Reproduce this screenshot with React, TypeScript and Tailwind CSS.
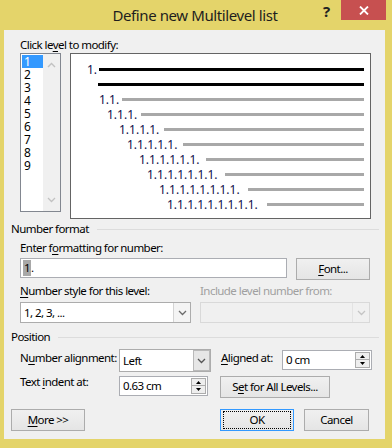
import React from 'react';

function U({ children }: { children: React.ReactNode }) {
  return <span className="underline decoration-1 underline-offset-[2px]">{children}</span>;
}

function Chevron({ color = '#6b6b6b' }: { color?: string }) {
  return (
    <svg width="9" height="6" viewBox="0 0 9 6">
      <path d="M1 1l3.5 3.5L8 1" fill="none" stroke={color} strokeWidth="1.3" />
    </svg>
  );
}

function Spin() {
  return (
    <div className="mr-[1px] flex h-[16px] w-[15px] flex-col">
      <div className="flex h-[8px] items-center justify-center border border-[#acacac] bg-[#eeeeee]">
        <svg width="5" height="3" viewBox="0 0 5 3">
          <path d="M0 3L2.5 0L5 3Z" fill="#000" />
        </svg>
      </div>
      <div className="-mt-px flex h-[9px] items-center justify-center border border-[#acacac] bg-[#eeeeee]">
        <svg width="5" height="3" viewBox="0 0 5 3">
          <path d="M0 0L2.5 3L5 0Z" fill="#000" />
        </svg>
      </div>
    </div>
  );
}

function Button({ className, children, focused }: { className: string; children: React.ReactNode; focused?: boolean }) {
  return (
    <div
      className={`flex h-[22px] border bg-linear-to-b from-[#f0f0f0] to-[#e5e5e5] ${
        focused ? 'border-[#3399ff] px-[2px] py-[1px]' : 'border-[#acacac]'
      } ${className}`}
    >
      <div
        className={`flex flex-1 items-center justify-center whitespace-nowrap leading-[16px] ${
          focused ? 'border border-dotted border-black' : ''
        }`}
      >
        {children}
      </div>
    </div>
  );
}

function GroupHeader({ title }: { title: string }) {
  return (
    <div className="ml-[7px] mr-[6px] flex items-center leading-[16px]">
      <span>{title}</span>
      <div className="ml-[8px] h-px flex-1 bg-[#dcdcdc]" />
    </div>
  );
}

const levels = ['1', '2', '3', '4', '5', '6', '7', '8', '9'];

const previewRows = [
  { label: '1.', pad: 'pl-[16px]', box: 'w-[12px]', line: 'bg-black' },
  { label: '', pad: 'pl-[27px]', box: 'w-0', line: 'bg-black' },
  { label: '1.1.', pad: 'pl-[28px]', box: 'w-[23px]', line: 'bg-[#a8a8a8]' },
  { label: '1.1.1.', pad: 'pl-[36px]', box: 'w-[34px]', line: 'bg-[#a8a8a8]' },
  { label: '1.1.1.1.', pad: 'pl-[48px]', box: 'w-[45px]', line: 'bg-[#a8a8a8]' },
  { label: '1.1.1.1.1.', pad: 'pl-[56px]', box: 'w-[56px]', line: 'bg-[#a8a8a8]' },
  { label: '1.1.1.1.1.1.', pad: 'pl-[68px]', box: 'w-[67px]', line: 'bg-[#a8a8a8]' },
  { label: '1.1.1.1.1.1.1.', pad: 'pl-[76px]', box: 'w-[78px]', line: 'bg-[#a8a8a8]' },
  { label: '1.1.1.1.1.1.1.1.', pad: 'pl-[88px]', box: 'w-[89px]', line: 'bg-[#a8a8a8]' },
  { label: '1.1.1.1.1.1.1.1.1.', pad: 'pl-[96px]', box: 'w-[100px]', line: 'bg-[#a8a8a8]' },
];

export default function App() {
  return (
    <div className="flex h-[448px] w-[392px] flex-col whitespace-nowrap bg-[#e4d46a] font-['Noto_Sans',sans-serif] text-[11.5px] tracking-[-0.55px] text-black">
      {/* title bar */}
      <div className="flex h-[30px] items-start">
        <div className="flex-1 pl-[67px] pt-[4px] text-center text-[15px] leading-[22px] tracking-[-0.4px] text-[#1e1e1e]">
          Define new Multilevel list
        </div>
        <div className="w-[18px] pt-[1px] text-[15px] font-bold leading-[20px] text-[#222]">?</div>
        <div className="mr-[6px] flex h-[20px] w-[45px] items-center justify-center bg-[#c75050]">
          <svg width="10" height="9" viewBox="0 0 10 9">
            <path d="M1 0.5l8 8M9 0.5l-8 8" stroke="#fff" strokeWidth="1.8" />
          </svg>
        </div>
      </div>

      {/* client area */}
      <div className="ml-[4px] flex h-[409px] w-[381px] flex-col bg-[#f0f0f0]">
        <div className="ml-[16px] mt-[7px] leading-[16px]">
          Click le<U>v</U>el to modify:
        </div>

        <div className="ml-[16px] flex items-start">
          {/* level list */}
          <div className="flex h-[159px] w-[41px] border border-[#828790] bg-white">
            <div className="flex flex-1 flex-col pl-px pt-px text-[12px] tracking-normal">
              {levels.map((l, i) => (
                <div
                  key={l}
                  className={`h-[13px] pl-[2px] leading-[13px] ${i === 0 ? 'bg-[#3399ff] text-white' : ''}`}
                >
                  {l}
                </div>
              ))}
            </div>
            <div className="flex w-[17px] flex-col items-center justify-between bg-[#f0f0f0] py-[8px]">
              <svg width="9" height="6" viewBox="0 0 9 6">
                <path d="M1 5l3.5-3.5L8 5" fill="none" stroke="#c2c2c2" strokeWidth="1.4" />
              </svg>
              <Chevron color="#c2c2c2" />
            </div>
          </div>

          {/* preview */}
          <div className="ml-[9px] flex h-[166px] w-[301px] flex-col border border-[#646464] bg-white pr-[6px] pt-[8px] text-[12px] tracking-normal text-[#10104a]">
            {previewRows.map((r, i) => (
              <div key={i} className={`flex h-[15px] items-center ${r.pad}`}>
                <div className={`shrink-0 leading-[15px] ${r.box}`}>{r.label}</div>
                <div className={`h-[3px] flex-1 ${r.line}`} />
              </div>
            ))}
          </div>
        </div>

        {/* number format */}
        <div className="mt-[2px]">
          <GroupHeader title="Number format" />
        </div>
        <div className="ml-[16px] mt-[3px] leading-[16px]">
          Enter f<U>o</U>rmatting for number:
        </div>
        <div className="ml-[16px] mt-[2px] flex items-start">
          <div className="flex h-[20px] w-[267px] items-center border border-[#abadb3] bg-white pl-[2px] leading-[16px]">
            <span className="bg-[#a8a8a8] px-px">1</span>
            <span>.</span>
          </div>
          <Button className="ml-[9px] w-[74px]">
            <span>
              <U>F</U>ont...
            </span>
          </Button>
        </div>

        <div className="ml-[16px] mt-[3px] flex leading-[16px]">
          <div className="w-[180px]">
            <U>N</U>umber style for this level:
          </div>
          <div className="text-[#a0a0a0]">Include level number from:</div>
        </div>
        <div className="ml-[16px] mt-[3px] flex">
          <div className="flex h-[21px] w-[171px] border border-[#acacac] bg-white">
            <div className="flex-1 pl-[3px] leading-[19px]">1, 2, 3, ...</div>
            <div className="flex w-[17px] items-center justify-center border-l border-[#d4d4d4] bg-[#f4f4f4]">
              <Chevron />
            </div>
          </div>
          <div className="ml-[9px] flex h-[21px] w-[170px] border border-[#d9d9d9] bg-[#f0f0f0]">
            <div className="flex-1" />
            <div className="flex w-[17px] items-center justify-center border-l border-[#e3e3e3]">
              <Chevron color="#c4c4c4" />
            </div>
          </div>
        </div>

        {/* position */}
        <div className="mt-[6px]">
          <GroupHeader title="Position" />
        </div>
        <div className="ml-[16px] mt-[4px] flex h-[23px] items-start">
          <div className="mt-[1px] w-[99px] leading-[16px]">
            N<U>u</U>mber alignment:
          </div>
          <div className="flex h-[23px] w-[92px] border border-[#acacac] bg-white">
            <div className="flex-1 pl-[3px] leading-[21px]">Left</div>
            <div className="flex w-[17px] items-center justify-center border border-[#b9b9b9] bg-[#e6e6e6]">
              <Chevron color="#555" />
            </div>
          </div>
          <div className="ml-[10px] mt-[1px] w-[61px] leading-[16px]">
            <U>A</U>ligned at:
          </div>
          <div className="mt-[1px] flex h-[20px] w-[90px] items-center border border-[#abadb3] bg-white pl-[3px]">
            <div className="flex-1 leading-[16px]">0 cm</div>
            <Spin />
          </div>
        </div>

        <div className="ml-[16px] mt-[4px] flex items-start">
          <div className="-mt-[2px] w-[99px] leading-[16px]">
            Text <U>i</U>ndent at:
          </div>
          <div className="flex h-[20px] w-[89px] items-center border border-[#abadb3] bg-white pl-[3px]">
            <div className="flex-1 leading-[16px]">0.63 cm</div>
            <Spin />
          </div>
          <Button className="ml-[12px] w-[110px]">
            <span>
              S<U>e</U>t for All Levels...
            </span>
          </Button>
        </div>

        <div className="ml-[7px] mt-[11px] flex">
          <Button className="w-[74px]">
            <span>
              <U>M</U>ore &gt;&gt;
            </span>
          </Button>
          <Button className="ml-[135px] w-[74px]" focused>
            OK
          </Button>
          <Button className="ml-[10px] w-[65px]">Cancel</Button>
        </div>
      </div>
    </div>
  );
}
